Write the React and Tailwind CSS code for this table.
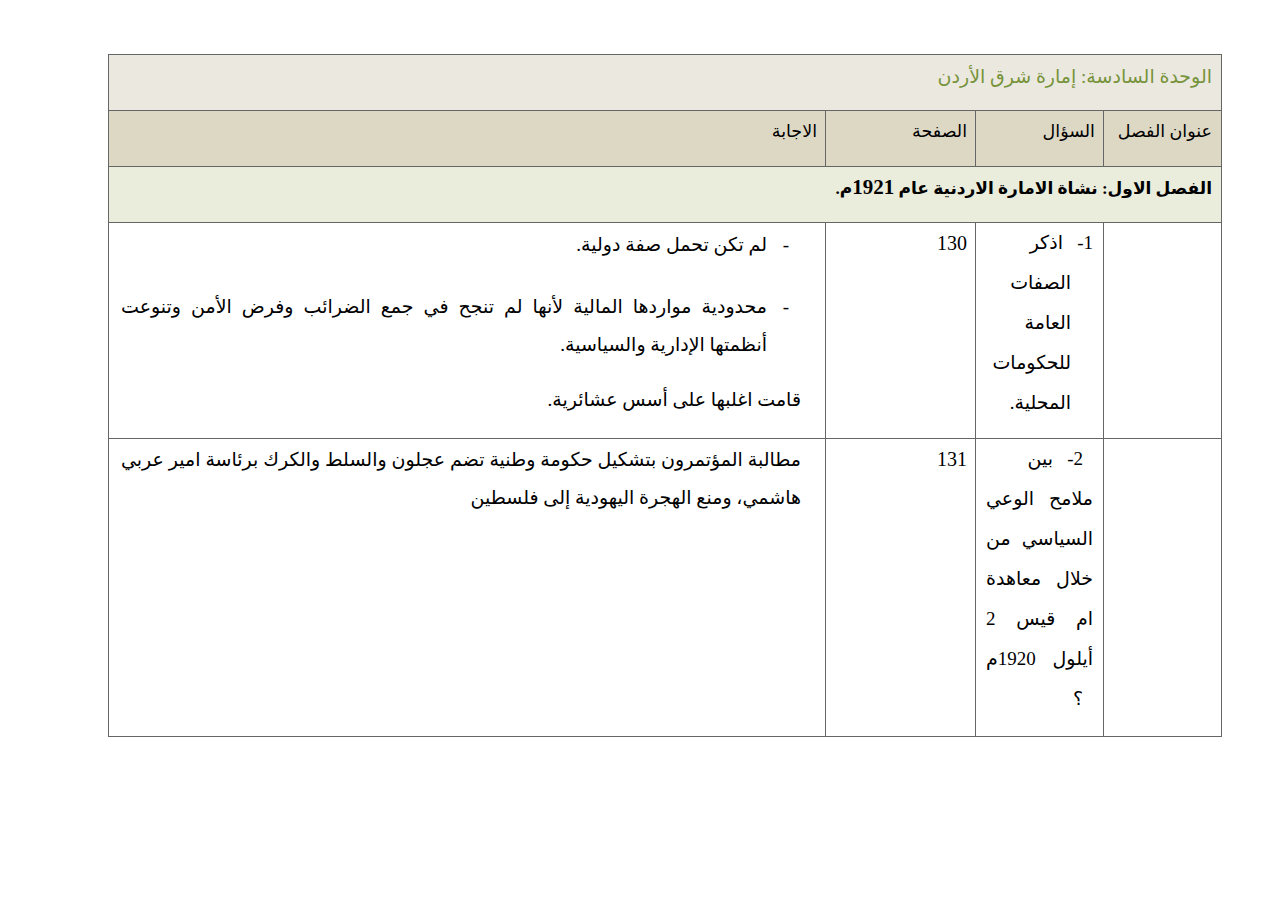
import React from "react";

const B = "border border-[#666666]";

export default function App() {
  return (
    <div className="w-[1273px] h-[900px] bg-white pt-[54px] pl-[108px]">
      <table
        dir="rtl"
        className="w-[1114px] border-collapse text-black text-[19px] leading-[40px] font-['Liberation_Serif','DejaVu_Sans',serif]"
      >
        <colgroup>
          <col className="w-[118px]" />
          <col className="w-[128px]" />
          <col className="w-[150px]" />
          <col />
        </colgroup>
        <tbody>
          <tr className="h-[56px] bg-[#ebe9df]">
            <td colSpan={4} className={`${B} align-top px-[9px] pt-[2px] text-[#77933c]`}>
              الوحدة السادسة: إمارة شرق الأردن
            </td>
          </tr>
          <tr className="h-[56px] bg-[#ddd8c4]">
            <td className={`${B} align-top px-[9px] pt-[0px] text-[17.5px]`}>عنوان الفصل</td>
            <td className={`${B} align-top px-[8px] pt-[0px] text-[17.5px]`}>السؤال</td>
            <td className={`${B} align-top px-[8px] pt-[0px] text-[17.5px]`}>الصفحة</td>
            <td className={`${B} align-top px-[8px] pt-[0px] text-[17.5px]`}>الاجابة</td>
          </tr>
          <tr className="h-[56px] bg-[#eaecdc]">
            <td colSpan={4} className={`${B} align-top px-[9px] pt-[0px] font-bold text-[17px]`}>
              الفصل الاول: نشاة الامارة الاردنية عام <span className="text-[21px]">1921</span>م.
            </td>
          </tr>
          <tr className="h-[216px]">
            <td className={B}></td>
            <td className={`${B} align-top pr-[10px] pl-[10px] pt-[0px]`}>
              <div>1-&nbsp;&nbsp; اذكر</div>
              <div className="pr-[22px]">الصفات</div>
              <div className="pr-[22px]">العامة</div>
              <div className="pr-[22px]">للحكومات</div>
              <div className="pr-[22px]">المحلية.</div>
            </td>
            <td className={`${B} align-top px-[8px] pt-[0px] text-[20px]`}>130</td>
            <td className={`${B} align-top pr-[24px] pl-[12px] pt-[3px] leading-[38px]`}>
              <div className="flex pr-[12px]">
                <span className="w-[22px] shrink-0">-</span>
                <span>لم تكن تحمل صفة دولية.</span>
              </div>
              <div className="flex mt-[24px] text-justify pr-[12px]">
                <span className="w-[22px] shrink-0">-</span>
                <span className="[text-align-last:right]">
                  محدودية مواردها المالية لأنها لم تنجح في جمع الضرائب وفرض الأمن وتنوعت أنظمتها الإدارية والسياسية.
                </span>
              </div>
              <div className="mt-[17px]">قامت اغلبها على أسس عشائرية.</div>
            </td>
          </tr>
          <tr className="h-[298px]">
            <td className={B}></td>
            <td className={`${B} align-top pr-[10px] pl-[10px] pt-[0px]`}>
              <div className="text-right pr-[10px]">2-&nbsp;&nbsp; بين</div>
              <div className="text-justify [text-align-last:justify]">
                <div>ملامح الوعي</div>
                <div>السياسي من</div>
                <div>خلال معاهدة</div>
                <div>ام قيس 2</div>
                <div>أيلول 1920م</div>
              </div>
              <div className="text-right pr-[10px]">؟</div>
            </td>
            <td className={`${B} align-top px-[8px] pt-[0px] text-[20px]`}>131</td>
            <td className={`${B} align-top pr-[24px] pl-[12px] pt-[2px] leading-[38px] text-justify [text-align-last:right]`}>
              مطالبة المؤتمرون بتشكيل حكومة وطنية تضم عجلون والسلط والكرك برئاسة امير عربي هاشمي، ومنع الهجرة اليهودية إلى فلسطين
            </td>
          </tr>
        </tbody>
      </table>
    </div>
  );
}
